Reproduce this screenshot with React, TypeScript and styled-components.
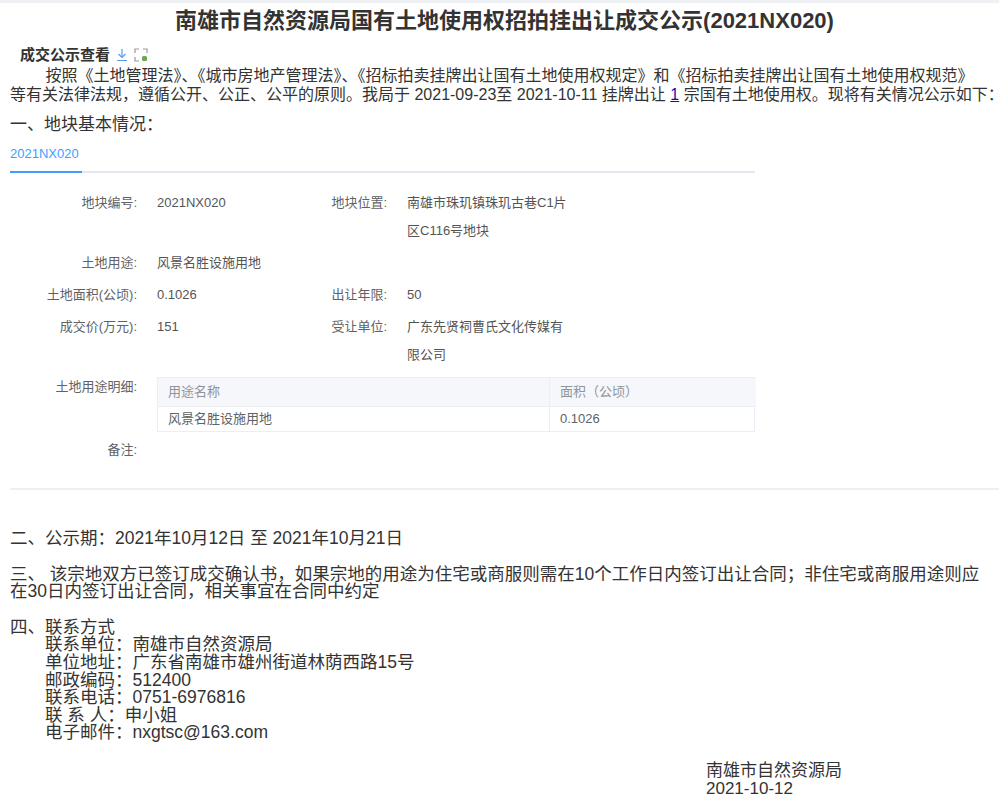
import React from "react";
import styled, { createGlobalStyle } from "styled-components";

const Global = createGlobalStyle`
  html, body { margin: 0; padding: 0; background: #fff; }
  body { font-family: "Liberation Sans", "Noto Sans CJK SC", sans-serif; color: #333; }
`;

const Page = styled.div`
  border-top: 3px solid #eef0f4;
  padding: 0 0 10px 10px;
`;
const Title = styled.h1`
  margin: 4px 0 0;
  text-align: center;
  font-size: 22px;
  font-weight: bold;
  line-height: 28px;
  color: #333;
`;
const SubHead = styled.div`
  display: flex;
  align-items: center;
  gap: 6px;
  margin: 9px 0 0 10px;
  font-size: 15px;
  font-weight: bold;
  color: #333;
  line-height: 22px;
`;
const Para = styled.p`
  margin: 0;
  font-size: 16px;
  line-height: 19px;
  color: #333;
  white-space: nowrap;
`;
const Section = styled.div<{ $mt?: number }>`
  font-size: 17px;
  line-height: 20px;
  margin-top: ${(p) => p.$mt ?? 0}px;
  color: #333;
`;
const Tabs = styled.div`
  width: 745px;
  border-bottom: 2px solid #e4e7ed;
  margin-top: 10px;
  display: flex;
`;
const Tab = styled.div`
  font-size: 13px;
  color: #409eff;
  padding: 0 0 8px 0;
  width: 72px;
  border-bottom: 2px solid #409eff;
  margin-bottom: -2px;
  line-height: 18px;
`;
const Grid = styled.div`
  display: grid;
  grid-template-columns: 127px 130px 80px 170px;
  column-gap: 20px;
  row-gap: 4px;
  margin-top: 16px;
  font-size: 13px;
  line-height: 28px;
  color: #606266;
`;
const Label = styled.div`
  text-align: right;
  color: #606266;
`;
const Value = styled.div<{ $span?: boolean }>`
  color: #555;
  width: 160px;
  ${(p) => (p.$span ? "grid-column: 2 / span 3; width: 598px;" : "")}
`;
const Table = styled.div`
  display: grid;
  grid-template-columns: 392px 206px;
  border: 1px solid #ebeef5;
  margin-top: 4px;
  line-height: 24px;
`;
const Th = styled.div<{ $last?: boolean }>`
  background: #f5f7fa;
  color: #909399;
  padding: 2px 10px;
  border-bottom: 1px solid #ebeef5;
  ${(p) => (!p.$last ? "border-right: 1px solid #ebeef5;" : "")}
`;
const Td = styled.div<{ $last?: boolean }>`
  color: #606266;
  padding: 0 10px;
  ${(p) => (!p.$last ? "border-right: 1px solid #ebeef5;" : "")}
`;
const Rule = styled.hr`
  border: none;
  border-top: 2px solid #eceff3;
  margin: 24px 0 0;
`;
const Block = styled.div<{ $mt: number }>`
  margin-top: ${(p) => p.$mt}px;
  font-size: 17.5px;
  line-height: 17.6px;
  color: #333;
`;
const Indent = styled.div`
  padding-left: 35px;
`;
const Sign = styled.div`
  margin: 20px 0 0 696px;
  font-size: 17px;
  line-height: 18px;
`;
const Link = styled.a`
  color: #1a0dab;
  text-decoration: underline;
`;

export default function App() {
  return (
    <>
      <Global />
      <Page>
        <Title>南雄市自然资源局国有土地使用权招拍挂出让成交公示(2021NX020)</Title>
        <SubHead>
          成交公示查看
          <svg width="12" height="14" viewBox="0 0 12 14">
            <path d="M6 1v8M2.5 6L6 9.5 9.5 6M1 12.5h10" stroke="#5b9cf0" strokeWidth="1.2" fill="none" />
          </svg>
          <svg width="14" height="14" viewBox="0 0 14 14">
            <path d="M1 5V1h4M9 1h4v4M1 9v4h4" stroke="#999" strokeWidth="1.2" fill="none" />
            <rect x="8" y="8" width="5" height="5" rx="1.5" fill="#6aa84f" />
          </svg>
        </SubHead>
        <Para>
          &nbsp;&nbsp;&nbsp;&nbsp;&nbsp;&nbsp;&nbsp;&nbsp;按照《土地管理法》、《城市房地产管理法》、《招标拍卖挂牌出让国有土地使用权规定》和《招标拍卖挂牌出让国有土地使用权规范》
          <br />
          等有关法律法规，遵循公开、公正、公平的原则。我局于 2021-09-23至 2021-10-11 挂牌出让 <Link>1</Link> 宗国有土地使用权。现将有关情况公示如下：
        </Para>
        <Section $mt={11}>一、地块基本情况：</Section>
        <Tabs>
          <Tab>2021NX020</Tab>
        </Tabs>
        <Grid>
          <Label>地块编号:</Label>
          <Value>2021NX020</Value>
          <Label>地块位置:</Label>
          <Value>南雄市珠玑镇珠玑古巷C1片区C116号地块</Value>
          <Label>土地用途:</Label>
          <Value>风景名胜设施用地</Value>
          <Label></Label>
          <Value></Value>
          <Label>土地面积(公顷):</Label>
          <Value>0.1026</Value>
          <Label>出让年限:</Label>
          <Value>50</Value>
          <Label>成交价(万元):</Label>
          <Value>151</Value>
          <Label>受让单位:</Label>
          <Value>广东先贤祠曹氏文化传媒有限公司</Value>
          <Label>土地用途明细:</Label>
          <Value $span>
            <Table>
              <Th>用途名称</Th>
              <Th $last>面积（公顷）</Th>
              <Td>风景名胜设施用地</Td>
              <Td $last>0.1026</Td>
            </Table>
          </Value>
          <Label>备注:</Label>
          <Value></Value>
        </Grid>
        <Rule />
        <Block $mt={40}>二、公示期：2021年10月12日 至 2021年10月21日</Block>
        <Block $mt={18}>
          三、 该宗地双方已签订成交确认书，如果宗地的用途为住宅或商服则需在10个工作日内签订出让合同；非住宅或商服用途则应
          <br />
          在30日内签订出让合同，相关事宜在合同中约定
        </Block>
        <Block $mt={18}>
          四、联系方式
          <Indent>
            联系单位：南雄市自然资源局
            <br />
            单位地址：广东省南雄市雄州街道林荫西路15号
            <br />
            邮政编码：512400
            <br />
            联系电话：0751-6976816
            <br />
            联 系 人：申小姐
            <br />
            电子邮件：nxgtsc@163.com
          </Indent>
        </Block>
        <Sign>
          南雄市自然资源局
          <br />
          2021-10-12
        </Sign>
      </Page>
    </>
  );
}
